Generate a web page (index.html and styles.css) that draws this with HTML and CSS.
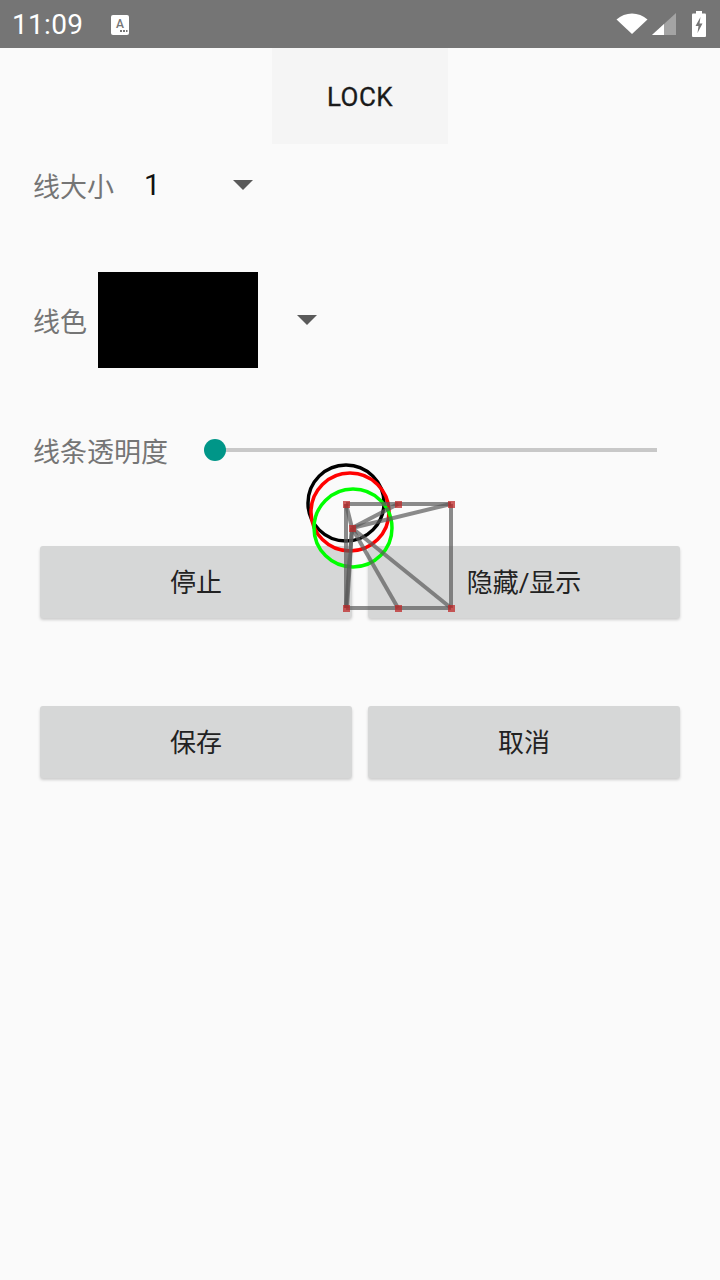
FILE: index.html
```html
<!DOCTYPE html>
<html lang="zh">
<head>
    <meta charset="UTF-8">
    <meta name="viewport" content="width=device-width, initial-scale=1.0">
    <title>画线设置</title>
    <link rel="stylesheet" href="styles.css">
</head>
<body>
    <div class="status-bar">
        <div class="status-left">
            <span class="clock">11:09</span>
            <svg class="icon-a" width="18" height="20" viewBox="0 0 18 20">
                <rect x="0" y="0" width="18" height="20" rx="2" fill="#fff"/>
                <text x="9" y="13" text-anchor="middle" font-family="Roboto, sans-serif" font-size="12" font-weight="500" fill="#757575">A</text>
                <rect x="9" y="15" width="2" height="2" fill="#757575"/>
                <rect x="12" y="15" width="2" height="2" fill="#757575"/>
                <rect x="15" y="15" width="1.5" height="2" fill="#757575"/>
            </svg>
        </div>
        <div class="status-right">
            <svg width="32" height="22" viewBox="0 0 32 22">
                <path d="M0.5 6.5 C9 -1.5 23 -1.5 31.5 6.5 L16 21 Z" fill="#fff"/>
            </svg>
            <svg width="24" height="22" viewBox="0 0 24 22">
                <path d="M24 0 L24 22 L0 22 Z" fill="#a4a4a4"/>
                <path d="M12 11 L12 22 L0 22 Z" fill="#fff"/>
            </svg>
            <svg class="battery" width="14" height="26" viewBox="0 0 14 26">
                <rect x="4" y="0" width="6" height="3" fill="#fff"/>
                <rect x="0" y="2.5" width="14" height="23.5" rx="1" fill="#fff"/>
                <path d="M8.5 6 L3.5 15 L6.5 15 L5.5 22 L10.5 12.5 L7.5 12.5 Z" fill="#757575"/>
            </svg>
        </div>
    </div>

    <main class="panel">
        <div class="lock-wrap">
            <button class="lock-btn">LOCK</button>
        </div>

        <div class="setting-row size-row">
            <span class="setting-label">线大小</span>
            <div class="spinner">
                <span class="spinner-value">1</span>
                <span class="caret"></span>
            </div>
        </div>

        <div class="setting-row color-row">
            <span class="setting-label">线色</span>
            <div class="spinner">
                <span class="color-swatch"></span>
                <span class="caret"></span>
            </div>
        </div>

        <div class="setting-row alpha-row">
            <span class="setting-label">线条透明度</span>
            <div class="slider">
                <span class="slider-track"></span>
                <span class="slider-thumb"></span>
            </div>
        </div>

        <div class="button-grid">
            <button class="action-btn">停止</button>
            <button class="action-btn">隐藏/显示</button>
        </div>

        <div class="button-grid">
            <button class="action-btn">保存</button>
            <button class="action-btn">取消</button>
        </div>
    </main>

    <!-- floating drawing layer -->
    <svg class="draw-layer" width="720" height="1280" viewBox="0 0 720 1280">
        <g fill="none" stroke-width="3.5">
            <circle cx="346" cy="503" r="38" stroke="#000"/>
            <circle cx="350" cy="512" r="39" stroke="#ff0000"/>
            <circle cx="353" cy="528" r="39" stroke="#00ff00"/>
        </g>
        <g stroke="rgba(90,90,90,0.7)" stroke-width="4" fill="none">
            <line x1="346" y1="504" x2="451" y2="504"/>
            <line x1="451" y1="504" x2="451" y2="608"/>
            <line x1="346" y1="608" x2="451" y2="608"/>
            <line x1="346" y1="504" x2="346" y2="608"/>
            <line x1="346" y1="504" x2="352" y2="528"/>
            <line x1="352" y1="528" x2="398" y2="504"/>
            <line x1="352" y1="528" x2="451" y2="504"/>
            <line x1="352" y1="528" x2="398" y2="608"/>
            <line x1="352" y1="528" x2="451" y2="608"/>
            <line x1="352" y1="528" x2="346" y2="608"/>
            <line x1="352" y1="528" x2="347" y2="608"/>
        </g>
        <g fill="rgba(190,40,40,0.75)">
            <rect x="343" y="501" width="7" height="7"/>
            <rect x="395" y="501" width="7" height="7"/>
            <rect x="448" y="501" width="7" height="7"/>
            <rect x="349" y="525" width="7" height="7"/>
            <rect x="343" y="605" width="7" height="7"/>
            <rect x="395" y="605" width="7" height="7"/>
            <rect x="448" y="605" width="7" height="7"/>
        </g>
    </svg>
</body>
</html>
```

FILE: styles.css
```css
* {
    margin: 0;
    padding: 0;
    box-sizing: border-box;
}

body {
    width: 720px;
    min-height: 1280px;
    background: #fafafa;
    font-family: Roboto, "Noto Sans CJK SC", sans-serif;
    position: relative;
    overflow: hidden;
}

/* Status bar */
.status-bar {
    height: 48px;
    background: #757575;
    display: flex;
    align-items: center;
    justify-content: space-between;
    padding: 0 14px 0 12px;
}

.status-left {
    display: flex;
    align-items: center;
    gap: 28px;
}

.clock {
    color: #fff;
    font-size: 28px;
    letter-spacing: 0.3px;
}

.icon-a {
    margin-top: 1px;
}

.status-right {
    display: flex;
    align-items: center;
    gap: 4px;
}

.status-right .battery {
    margin-left: 12px;
}

/* Main panel */
.panel {
    display: flex;
    flex-direction: column;
}

.lock-wrap {
    display: flex;
    justify-content: center;
}

.lock-btn {
    width: 176px;
    height: 96px;
    padding-top: 2px;
    border: none;
    background: #f5f5f5;
    color: #1a1a1a;
    font-family: Roboto, sans-serif;
    font-weight: 400;
    font-size: 26px;
    letter-spacing: 0.4px;
    -webkit-text-stroke: 0.3px #1a1a1a;
}

.setting-row {
    display: flex;
    align-items: center;
    padding-left: 33px;
}

.setting-label {
    color: #757575;
    font-size: 27px;
}

.spinner {
    display: flex;
    align-items: center;
}

.size-row {
    height: 82px;
}

.size-row .spinner-value {
    font-size: 29px;
    color: #111;
    margin-left: 30px;
    width: 89px;
}

.caret {
    width: 0;
    height: 0;
    border-left: 10px solid transparent;
    border-right: 10px solid transparent;
    border-top: 10px solid #5a5a5a;
}

.color-row {
    margin-top: 46px;
    height: 96px;
}

.color-swatch {
    display: block;
    width: 160px;
    height: 96px;
    background: #000;
    margin-left: 11px;
    margin-right: 39px;
}

.alpha-row {
    margin-top: 36px;
    height: 92px;
}

.slider {
    position: relative;
    margin-left: 35px;
    width: 454px;
    height: 22px;
    display: flex;
    align-items: center;
}

.slider-track {
    display: block;
    margin-left: 12px;
    width: 442px;
    height: 4px;
    background: #c8c8c8;
}

.slider-thumb {
    position: absolute;
    left: 1px;
    top: 0;
    width: 22px;
    height: 22px;
    border-radius: 50%;
    background: #009688;
}

.button-grid {
    display: grid;
    grid-template-columns: 1fr 1fr;
    gap: 16px;
    padding: 0 40px;
    margin-top: 50px;
}

.button-grid + .button-grid {
    margin-top: 88px;
}

.action-btn {
    height: 72px;
    padding-bottom: 3px;
    border: none;
    border-radius: 3px;
    background: #d6d7d7;
    box-shadow: 0 2px 3px rgba(0, 0, 0, 0.18);
    color: #222;
    font-family: Roboto, "Noto Sans CJK SC", sans-serif;
    font-size: 26px;
}

/* Drawing overlay */
.draw-layer {
    position: absolute;
    left: 0;
    top: 0;
    pointer-events: none;
}
```
